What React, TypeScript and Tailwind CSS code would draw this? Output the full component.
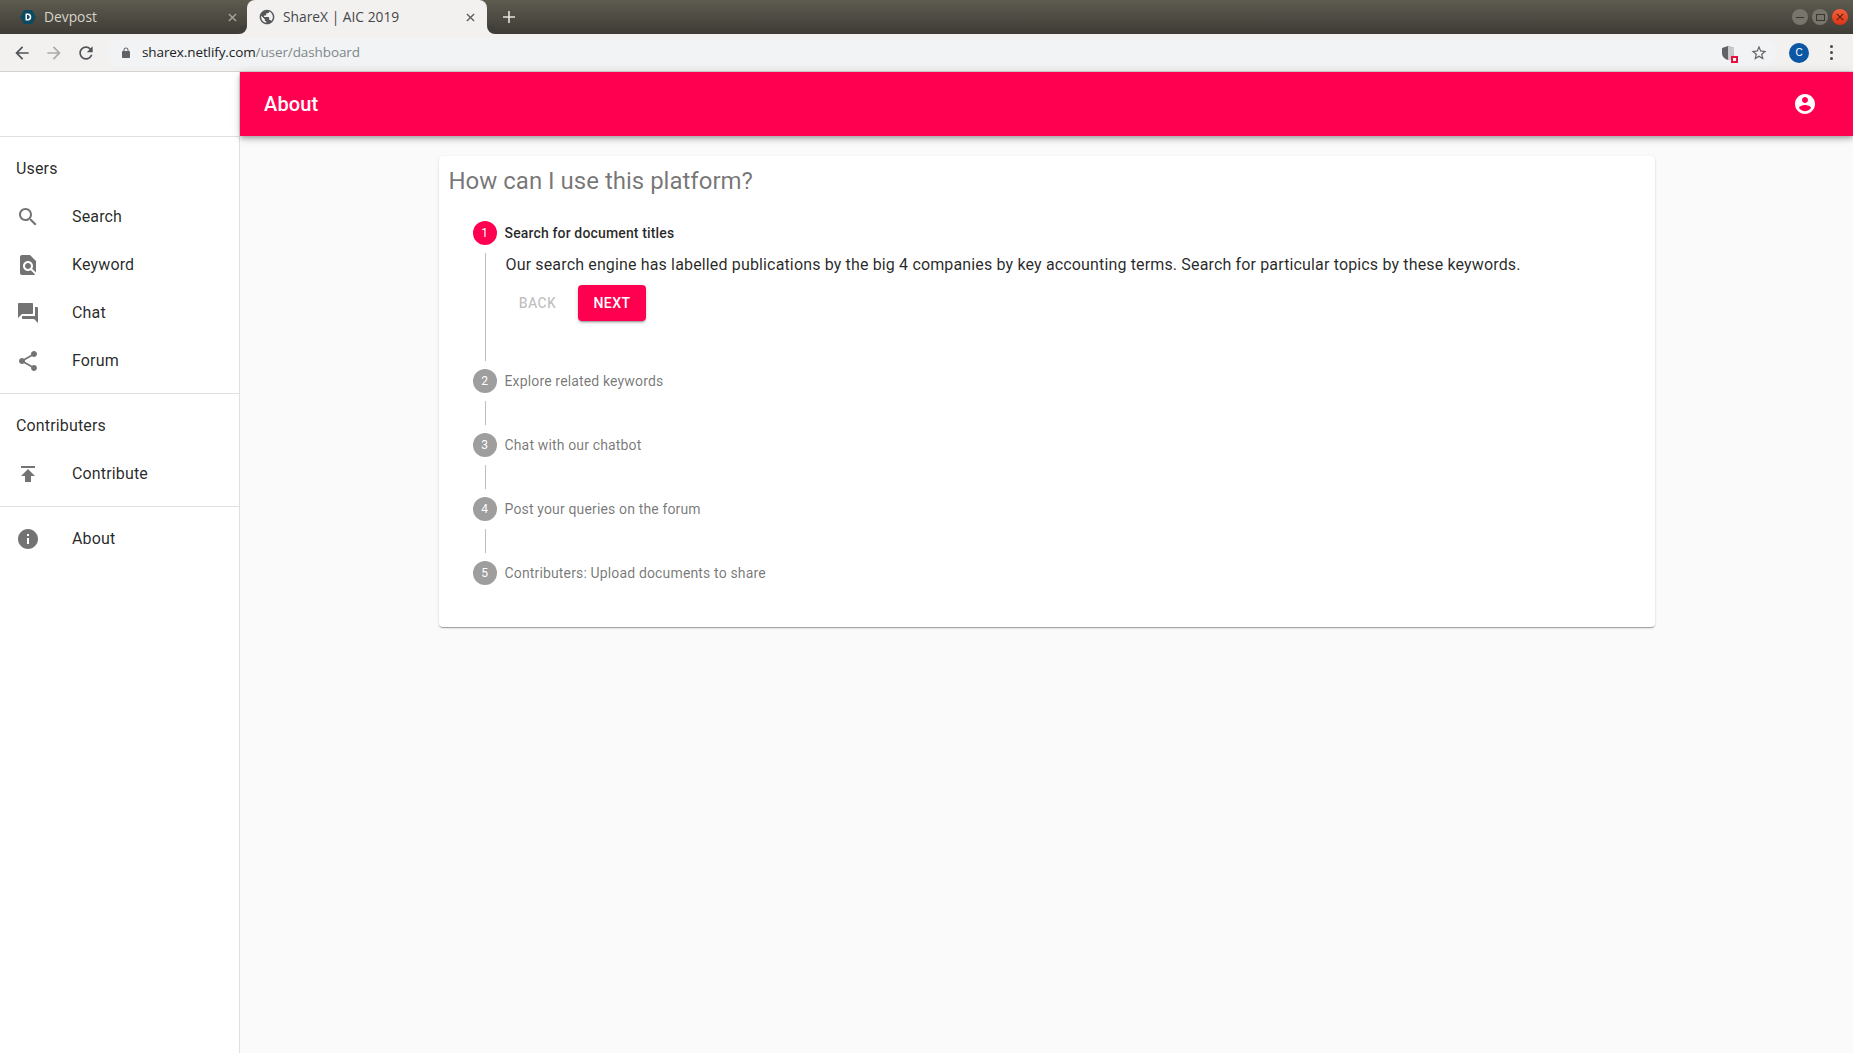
import type { ReactNode } from "react";

const ICONS = {
  search: "M15.5 14h-.79l-.28-.27C15.41 12.59 16 11.11 16 9.5 16 5.91 13.09 3 9.5 3S3 5.91 3 9.5 5.91 16 9.5 16c1.61 0 3.09-.59 4.23-1.57l.27.28v.79l5 4.99L20.49 19l-4.99-5zm-6 0C7.01 14 5 11.99 5 9.5S7.01 5 9.5 5 14 7.01 14 9.5 11.99 14 9.5 14z",
  findInPage: "M20 19.59V8l-6-6H6c-1.1 0-1.99.9-1.99 2L4 20c0 1.1.89 2 1.99 2H18c.45 0 .85-.15 1.19-.4l-4.43-4.43c-.8.52-1.74.83-2.76.83-2.76 0-5-2.24-5-5s2.24-5 5-5 5 2.24 5 5c0 1.02-.31 1.96-.83 2.75L20 19.59zM9 13c0 1.66 1.34 3 3 3s3-1.34 3-3-1.34-3-3-3-3 1.34-3 3z",
  forum: "M21 6h-2v9H6v2c0 .55.45 1 1 1h11l4 4V7c0-.55-.45-1-1-1zm-4 6V3c0-.55-.45-1-1-1H3c-.55 0-1 .45-1 1v14l4-4h10c.55 0 1-.45 1-1z",
  share: "M18 16.08c-.76 0-1.44.3-1.96.77L8.91 12.7c.05-.23.09-.46.09-.7s-.04-.47-.09-.7l7.05-4.11c.54.5 1.25.81 2.04.81 1.66 0 3-1.34 3-3s-1.34-3-3-3-3 1.34-3 3c0 .24.04.47.09.7L8.04 9.81C7.5 9.31 6.79 9 6 9c-1.66 0-3 1.34-3 3s1.34 3 3 3c.79 0 1.5-.31 2.04-.81l7.12 4.16c-.05.21-.08.43-.08.65 0 1.61 1.31 2.92 2.92 2.92 1.61 0 2.92-1.31 2.92-2.92s-1.31-2.92-2.92-2.92z",
  publish: "M5 4v2h14V4H5zm0 10h4v6h6v-6h4l-7-7-7 7z",
  info: "M12 2C6.48 2 2 6.48 2 12s4.48 10 10 10 10-4.48 10-10S17.52 2 12 2zm1 15h-2v-6h2v6zm0-8h-2V7h2v2z",
  account: "M12 2C6.48 2 2 6.48 2 12s4.48 10 10 10 10-4.48 10-10S17.52 2 12 2zm0 3c1.66 0 3 1.34 3 3s-1.34 3-3 3-3-1.34-3-3 1.34-3 3-3zm0 14.2c-2.5 0-4.71-1.28-6-3.22.03-1.99 4-3.08 6-3.08 1.99 0 5.97 1.09 6 3.08-1.29 1.94-3.5 3.22-6 3.22z",
  globe: "M12 2C6.48 2 2 6.48 2 12s4.48 10 10 10 10-4.48 10-10S17.52 2 12 2zm-1 17.93c-3.95-.49-7-3.85-7-7.93 0-.62.08-1.21.21-1.79L9 15v1c0 1.1.9 2 2 2v1.93zm6.9-2.54c-.26-.81-1-1.39-1.9-1.39h-1v-3c0-.55-.45-1-1-1H8v-2h2c.55 0 1-.45 1-1V7h2c1.1 0 2-.9 2-2v-.41c2.93 1.19 5 4.06 5 7.41 0 2.08-.8 3.97-2.1 5.39z",
  back: "M20 11H7.83l5.59-5.59L12 4l-8 8 8 8 1.41-1.41L7.83 13H20v-2z",
  forward: "M12 4l-1.41 1.41L16.17 11H4v2h12.17l-5.58 5.59L12 20l8-8z",
  refresh: "M17.65 6.35C16.2 4.9 14.21 4 12 4c-4.42 0-7.99 3.58-7.99 8s3.57 8 7.99 8c3.73 0 6.84-2.55 7.73-6h-2.08c-.82 2.33-3.04 4-5.65 4-3.31 0-6-2.69-6-6s2.69-6 6-6c1.66 0 3.14.69 4.22 1.78L13 11h7V4l-2.35 2.35z",
  lock: "M18 8h-1V6c0-2.76-2.24-5-5-5S7 3.24 7 6v2H6c-1.1 0-2 .9-2 2v10c0 1.1.9 2 2 2h12c1.1 0 2-.9 2-2V10c0-1.1-.9-2-2-2zM9 6c0-1.66 1.34-3 3-3s3 1.34 3 3v2H9V6z",
  star: "M22 9.24l-7.19-.62L12 2 9.19 8.63 2 9.24l5.46 4.73L5.82 21 12 17.27 18.18 21l-1.63-7.03L22 9.24zM12 15.4l-3.76 2.27 1-4.28-3.32-2.88 4.38-.38L12 6.1l1.71 4.04 4.38.38-3.32 2.88 1 4.28L12 15.4z",
};

function Icon({ d, className }: { d: string; className: string }) {
  return (
    <svg viewBox="0 0 24 24" fill="currentColor" className={className}>
      <path d={d} />
    </svg>
  );
}

function CloseX({ className }: { className: string }) {
  return (
    <svg viewBox="0 0 10 10" className={className} stroke="currentColor" strokeWidth="1.5">
      <path d="M1 1l8 8M9 1l-8 8" />
    </svg>
  );
}

function BrowserChrome() {
  return (
    <div className="font-['Open_Sans',sans-serif]">
      <div className="flex h-[34px] bg-gradient-to-b from-[#5e5b50] to-[#3e3c36]">
        <div className="flex w-[247px] items-center pl-[20px] pr-[10px]">
          <svg viewBox="0 0 16 16" className="h-4 w-4">
            <path d="M4 1h8l4 7-4 7H4L0 8z" fill="#0b4a60" />
            <path d="M5.5 4.5h2.6c2 0 3.2 1.3 3.2 3.5s-1.2 3.5-3.2 3.5H5.5z M7 6v4h1c1 0 1.7-.7 1.7-2S9 6 8 6z" fill="#fff" fillRule="evenodd" />
          </svg>
          <span className="ml-2 flex-1 text-[13.8px] text-[#d6d3c9]">Devpost</span>
          <CloseX className="h-[9px] w-[9px] text-[#a8a69d]" />
        </div>
        <div className="relative flex w-[240px] items-center rounded-t-lg bg-[#f2f1f0] pl-[12px] pr-[12px]">
          <span className="absolute bottom-0 -left-2 h-2 w-2 bg-[#f2f1f0]">
            <span className="block h-2 w-2 rounded-br-lg bg-[#403e38]" />
          </span>
          <Icon d={ICONS.globe} className="h-4 w-4 scale-110 text-[#55565a]" />
          <span className="ml-[8px] flex-1 text-[13.8px] text-[#45474a]">ShareX | AIC 2019</span>
          <CloseX className="h-[9px] w-[9px] text-[#5c5d60]" />
          <span className="absolute bottom-0 -right-2 h-2 w-2 bg-[#f2f1f0]">
            <span className="block h-2 w-2 rounded-bl-lg bg-[#403e38]" />
          </span>
        </div>
        <div className="ml-[15px] flex items-center">
          <svg viewBox="0 0 14 14" className="h-[14px] w-[14px] text-[#e6e4dc]" stroke="currentColor" strokeWidth="1.6">
            <path d="M7 1v12M1 7h12" />
          </svg>
        </div>
        <div className="ml-auto flex items-center gap-1 pr-[5px]">
          <span className="flex h-4 w-4 items-center justify-center rounded-full bg-[#77756c]">
            <span className="h-px w-2 bg-[#37362f]" />
          </span>
          <span className="flex h-4 w-4 items-center justify-center rounded-full bg-[#77756c]">
            <span className="h-[7px] w-[9px] border border-[#37362f]" />
          </span>
          <span className="flex h-4 w-4 items-center justify-center rounded-full bg-gradient-to-b from-[#f4603a] to-[#dd3216]">
            <CloseX className="h-2 w-2 text-[#5a2013]" />
          </span>
        </div>
      </div>
      <div className="flex h-[38px] items-center border-b border-[#d3d3d3] bg-[#f2f1f0] pl-[12px] pr-[20px]">
        <Icon d={ICONS.back} className="h-5 w-5 text-[#505357]" />
        <Icon d={ICONS.forward} className="ml-[12px] h-5 w-5 text-[#ababac]" />
        <Icon d={ICONS.refresh} className="ml-[12px] h-5 w-5 text-[#505357]" />
        <div className="ml-[11px] flex h-[29px] flex-1 items-center rounded-full bg-[#f1f3f4] pl-[13px] pr-[9px]">
          <Icon d={ICONS.lock} className="h-3 w-3 text-[#5f6368]" />
          <span className="ml-[10px] flex-1 text-[13.5px] tracking-[-0.1px]">
            <span className="text-[#202124]">sharex.netlify.com</span>
            <span className="text-[#80868b]">/user/dashboard</span>
          </span>
          <span className="relative h-4 w-4">
            <svg viewBox="0 0 16 16" className="h-4 w-4">
              <path d="M8 1l6 2v5c0 3.5-2.5 6-6 7-3.5-1-6-3.5-6-7V3z" fill="#5f6368" />
              <path d="M8 1l6 2v5c0 3.5-2.5 6-6 7z" fill="#c7c9cc" />
            </svg>
            <span className="absolute -right-[2px] -bottom-[2px] flex h-[7px] w-[7px] items-center justify-center bg-[#e8103f]">
              <span className="h-[3px] w-[3px] bg-white" />
            </span>
          </span>
          <Icon d={ICONS.star} className="ml-[14px] h-[18px] w-[18px] text-[#5f6368]" />
        </div>
        <span className="ml-[12px] flex h-5 w-5 items-center justify-center rounded-full bg-[#0b57a4] font-['Liberation_Sans',sans-serif] text-[10px] text-white">
          C
        </span>
        <span className="ml-[21px] flex flex-col gap-[3px]">
          <span className="h-[3px] w-[3px] rounded-full bg-[#45474a]" />
          <span className="h-[3px] w-[3px] rounded-full bg-[#45474a]" />
          <span className="h-[3px] w-[3px] rounded-full bg-[#45474a]" />
        </span>
      </div>
    </div>
  );
}

function NavItem({ d, label }: { d: string; label: string }) {
  return (
    <div className="flex h-12 items-center px-4">
      <Icon d={d} className="h-6 w-6 text-black/55" />
      <span className="ml-8 text-base tracking-[0.15px] text-black/85">{label}</span>
    </div>
  );
}

function NavGroup({ children }: { children: ReactNode }) {
  return <div className="border-b border-[#e0e0e0] py-2">{children}</div>;
}

function Sidebar() {
  return (
    <aside className="w-[240px] shrink-0 border-r border-[#e0e0e0] bg-white">
      <div className="h-[65px] border-b border-[#e0e0e0]" />
      <NavGroup>
        <div className="flex h-12 items-center px-4 text-base tracking-[0.15px] text-black/85">Users</div>
        <NavItem d={ICONS.search} label="Search" />
        <NavItem d={ICONS.findInPage} label="Keyword" />
        <NavItem d={ICONS.forum} label="Chat" />
        <NavItem d={ICONS.share} label="Forum" />
      </NavGroup>
      <NavGroup>
        <div className="flex h-12 items-center px-4 text-base tracking-[0.15px] text-black/85">Contributers</div>
        <NavItem d={ICONS.publish} label="Contribute" />
      </NavGroup>
      <div className="py-2">
        <NavItem d={ICONS.info} label="About" />
      </div>
    </aside>
  );
}

function StepHead({ n, label, active }: { n: number; label: string; active?: boolean }) {
  return (
    <div className="flex h-6 items-center">
      <span
        className={
          active
            ? "flex h-6 w-6 items-center justify-center rounded-full bg-[#ff0050] text-xs text-white"
            : "flex h-6 w-6 items-center justify-center rounded-full bg-[#9e9e9e] text-xs text-white"
        }
      >
        {n}
      </span>
      <span
        className={
          active
            ? "ml-2 text-sm font-medium tracking-[0.15px] text-black/85"
            : "ml-2 text-sm tracking-[0.15px] text-black/55"
        }
      >
        {label}
      </span>
    </div>
  );
}

function Connector() {
  return <div className="my-2 ml-3 h-6 border-l border-[#bdbdbd]" />;
}

function Stepper() {
  return (
    <div className="px-[34px] pt-6 pb-[42px]">
      <StepHead n={1} label="Search for document titles" active />
      <div className="my-2 ml-3 h-[108px] border-l border-[#bdbdbd] pl-5">
        <p className="text-base leading-6 tracking-[0.15px] text-black/85">
          Our search engine has labelled publications by the big 4 companies by key accounting terms. Search for
          particular topics by these keywords.
        </p>
        <div className="mt-2 flex gap-2">
          <button className="h-9 min-w-16 rounded px-2 text-sm font-medium tracking-[0.4px] text-black/25">BACK</button>
          <button className="h-9 min-w-16 rounded bg-[#ff0050] px-4 text-sm font-medium tracking-[0.4px] text-white shadow-[0_3px_1px_-2px_rgba(0,0,0,0.2),0_2px_2px_0_rgba(0,0,0,0.14),0_1px_5px_0_rgba(0,0,0,0.12)]">
            NEXT
          </button>
        </div>
      </div>
      <StepHead n={2} label="Explore related keywords" />
      <Connector />
      <StepHead n={3} label="Chat with our chatbot" />
      <Connector />
      <StepHead n={4} label="Post your queries on the forum" />
      <Connector />
      <StepHead n={5} label="Contributers: Upload documents to share" />
    </div>
  );
}

export default function App() {
  return (
    <div className="flex h-screen flex-col overflow-hidden bg-white font-['Roboto',sans-serif]">
      <BrowserChrome />
      <div className="flex min-h-0 flex-1">
        <Sidebar />
        <main className="flex flex-1 flex-col bg-[#fafafa]">
          <header className="flex h-16 shrink-0 items-center justify-between bg-[#ff0050] pl-6 pr-[36px] text-white shadow-[0_2px_4px_-1px_rgba(0,0,0,0.2),0_4px_5px_0_rgba(0,0,0,0.14),0_1px_10px_0_rgba(0,0,0,0.12)]">
            <h1 className="text-xl font-medium tracking-[0.15px]">About</h1>
            <Icon d={ICONS.account} className="h-6 w-6" />
          </header>
          <section className="mx-auto mt-5 w-[1216px] rounded bg-white pt-[9px] shadow-[0_2px_1px_-1px_rgba(0,0,0,0.2),0_1px_1px_0_rgba(0,0,0,0.14),0_1px_3px_0_rgba(0,0,0,0.12)]">
            <h2 className="px-[10px] text-2xl leading-8 text-black/55">How can I use this platform?</h2>
            <Stepper />
          </section>
        </main>
      </div>
    </div>
  );
}
